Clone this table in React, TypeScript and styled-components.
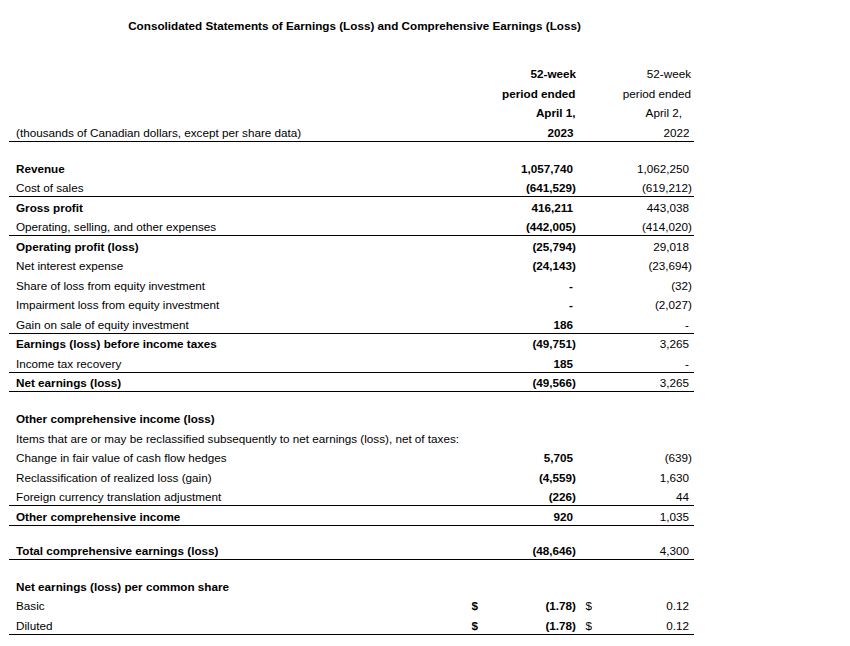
import React from "react";
import styled, { createGlobalStyle } from "styled-components";

const GlobalStyle = createGlobalStyle`
  html, body { margin: 0; padding: 0; background: #ffffff; }
  body {
    font-family: "Liberation Sans", Arial, sans-serif;
    font-size: 11.7px;
    color: #000000;
  }
`;

const Page = styled.div`
  width: 850px;
  height: 646px;
  box-sizing: border-box;
  padding: 15.5px 0 0 9px;
  background: #ffffff;
`;

const Sheet = styled.div`
  width: 685px;
  display: flex;
  flex-direction: column;
`;

const Title = styled.h1`
  margin: 0 0 28.5px 0;
  height: 19.5px;
  box-sizing: border-box;
  padding: 0 0 2px 6px;
  display: flex;
  align-items: flex-end;
  justify-content: center;
  font-size: 11.7px;
  line-height: 14px;
  font-weight: 700;
  white-space: nowrap;
`;

const Row = styled.div<{ $rule?: boolean }>`
  display: grid;
  grid-template-columns: 457px 40px 72px 22px 94px;
  height: 19.5px;
  box-sizing: border-box;
  align-items: end;
  padding-bottom: 1px;
  border-bottom: 1px solid ${(p) => (p.$rule ? "#000000" : "transparent")};
  line-height: 14px;
`;

const Spacer = styled.div<{ $h: number }>`
  height: ${(p) => p.$h}px;
`;

const Label = styled.div<{ $bold?: boolean }>`
  padding-left: 7px;
  font-weight: ${(p) => (p.$bold ? 700 : 400)};
  white-space: nowrap;
`;

const Cur = styled.div<{ $bold?: boolean; $pad: number }>`
  padding-left: ${(p) => p.$pad}px;
  font-weight: ${(p) => (p.$bold ? 700 : 400)};
`;

const Num = styled.div<{ $bold?: boolean; $neg?: boolean; $col: 2 | 3 | 4 | 5 }>`
  grid-column: ${(p) => p.$col};
  text-align: right;
  white-space: nowrap;
  font-weight: ${(p) => (p.$bold ? 700 : 400)};
  padding-right: ${(p) => (p.$neg ? 2 : 5)}px;
`;

const HeadCell = styled.div<{ $bold?: boolean; $col: "2 / span 2" | "4 / span 2"; $pad: number }>`
  grid-column: ${(p) => p.$col};
  text-align: right;
  white-space: nowrap;
  font-weight: ${(p) => (p.$bold ? 700 : 400)};
  padding-right: ${(p) => p.$pad}px;
`;

type Line = {
  label: string;
  bold?: boolean;
  a?: string;
  b?: string;
  rule?: boolean;
  cur?: boolean;
};

const sections: Line[][] = [
  [
    { label: "Revenue", bold: true, a: "1,057,740", b: "1,062,250" },
    { label: "Cost of sales", a: "(641,529)", b: "(619,212)", rule: true },
    { label: "Gross profit", bold: true, a: "416,211", b: "443,038" },
    { label: "Operating, selling, and other expenses", a: "(442,005)", b: "(414,020)", rule: true },
    { label: "Operating profit (loss)", bold: true, a: "(25,794)", b: "29,018" },
    { label: "Net interest expense", a: "(24,143)", b: "(23,694)" },
    { label: "Share of loss from equity investment", a: "-", b: "(32)" },
    { label: "Impairment loss from equity investment", a: "-", b: "(2,027)" },
    { label: "Gain on sale of equity investment", a: "186", b: "-", rule: true },
    { label: "Earnings (loss) before income taxes", bold: true, a: "(49,751)", b: "3,265" },
    { label: "Income tax recovery", a: "185", b: "-", rule: true },
    { label: "Net earnings (loss)", bold: true, a: "(49,566)", b: "3,265", rule: true },
  ],
  [
    { label: "Other comprehensive income (loss)", bold: true },
    { label: "Items that are or may be reclassified subsequently to net earnings (loss), net of taxes:" },
    { label: "Change in fair value of cash flow hedges", a: "5,705", b: "(639)" },
    { label: "Reclassification of realized loss (gain)", a: "(4,559)", b: "1,630" },
    { label: "Foreign currency translation adjustment", a: "(226)", b: "44", rule: true },
    { label: "Other comprehensive income", bold: true, a: "920", b: "1,035", rule: true },
  ],
  [{ label: "Total comprehensive earnings (loss)", bold: true, a: "(48,646)", b: "4,300", rule: true }],
  [
    { label: "Net earnings (loss) per common share", bold: true },
    { label: "Basic", a: "(1.78)", b: "0.12", cur: true },
    { label: "Diluted", a: "(1.78)", b: "0.12", cur: true, rule: true },
  ],
];

const spacerHeights = [16.5, 16.5, 15, 16];

const isNeg = (v: string) => v.startsWith("(");

const DataRow: React.FC<{ line: Line }> = ({ line }) => (
  <Row $rule={line.rule}>
    <Label $bold={line.bold}>{line.label}</Label>
    {line.cur && (
      <Cur $bold $pad={5.5}>
        $
      </Cur>
    )}
    {line.a !== undefined && (
      <Num $col={3} $bold $neg={isNeg(line.a)}>
        {line.a}
      </Num>
    )}
    {line.cur && <Cur $pad={7.5}>$</Cur>}
    {line.b !== undefined && (
      <Num $col={5} $neg={isNeg(line.b)}>
        {line.b}
      </Num>
    )}
  </Row>
);

const header: { a: string; aPad: number; b: string; bPad: number }[] = [
  { a: "52-week", aPad: 2, b: "52-week", bPad: 3 },
  { a: "period ended", aPad: 2.5, b: "period ended", bPad: 3 },
  { a: "April 1,", aPad: 2.5, b: "April 2,", bPad: 12 },
  { a: "2023", aPad: 4.5, b: "2022", bPad: 4.5 },
];

export default function App() {
  return (
    <>
      <GlobalStyle />
      <Page>
        <Sheet>
          <Title>Consolidated Statements of Earnings (Loss) and Comprehensive Earnings (Loss)</Title>
          {header.map((h, i) => (
            <Row key={i} $rule={i === header.length - 1}>
              <Label>{i === header.length - 1 ? "(thousands of Canadian dollars, except per share data)" : ""}</Label>
              <HeadCell $col="2 / span 2" $bold $pad={h.aPad}>
                {h.a}
              </HeadCell>
              <HeadCell $col="4 / span 2" $pad={h.bPad}>
                {h.b}
              </HeadCell>
            </Row>
          ))}
          {sections.map((sec, si) => (
            <React.Fragment key={si}>
              <Spacer $h={spacerHeights[si]} />
              {sec.map((line, li) => (
                <DataRow key={li} line={line} />
              ))}
            </React.Fragment>
          ))}
        </Sheet>
      </Page>
    </>
  );
}
